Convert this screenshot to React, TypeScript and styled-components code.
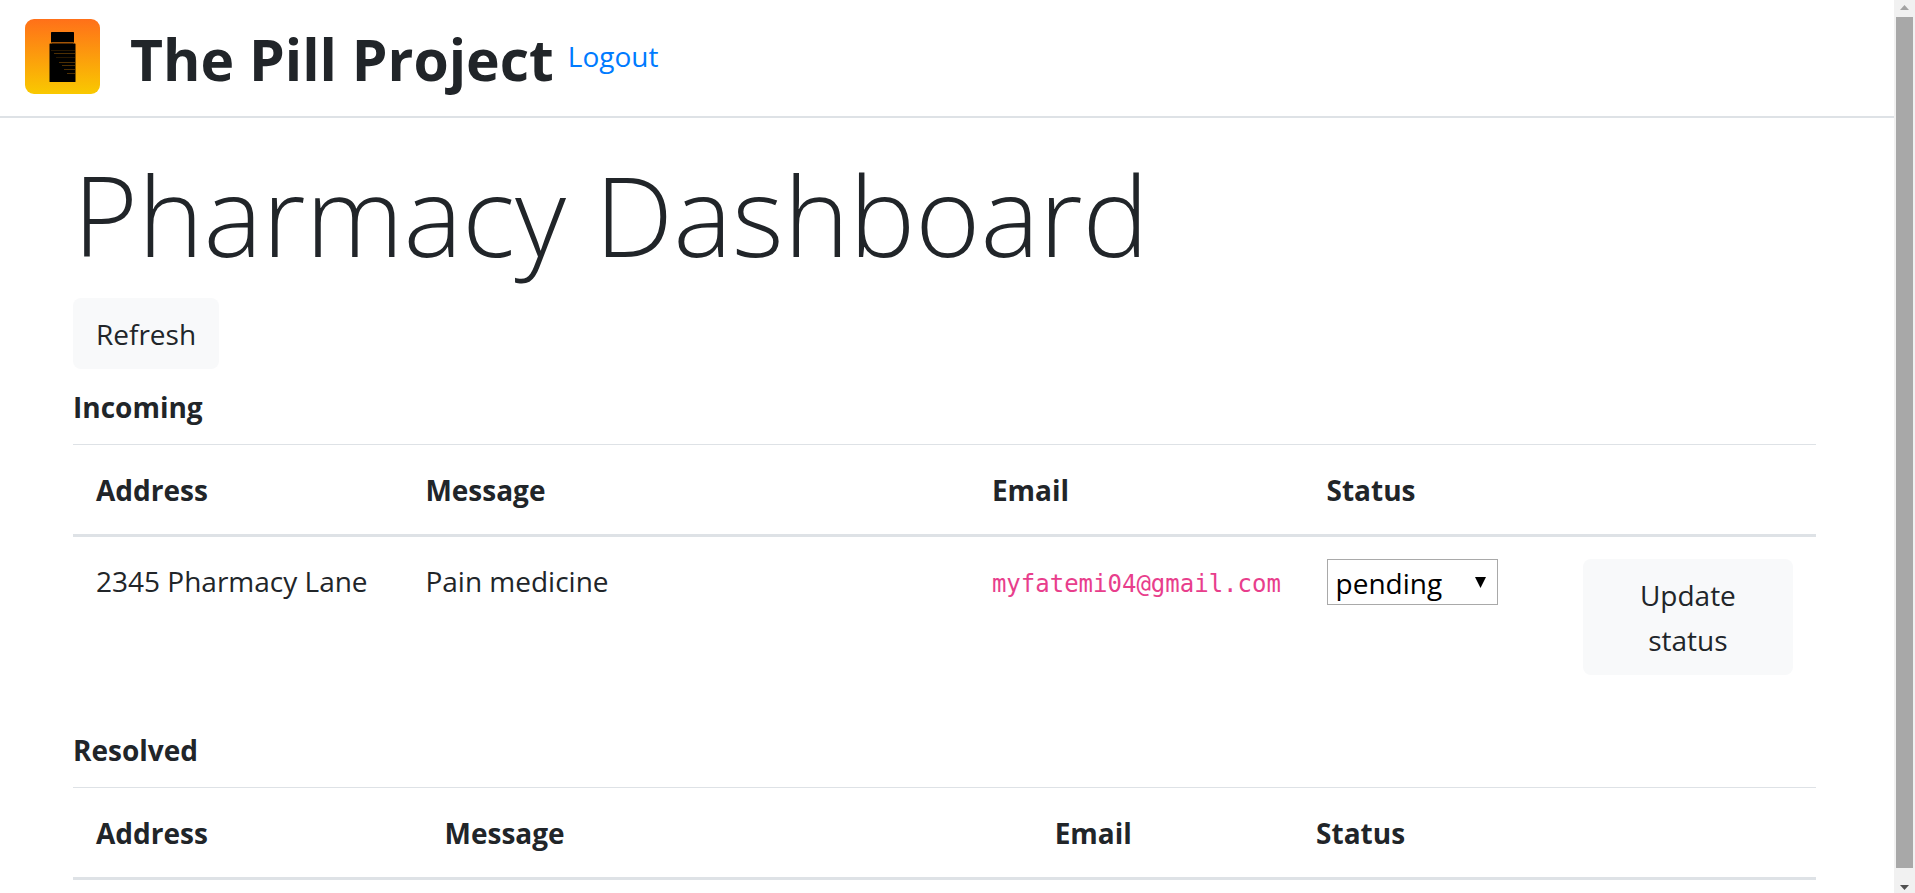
import React from "react";
import styled, { createGlobalStyle } from "styled-components";

const GlobalStyle = createGlobalStyle`
  *, *::before, *::after { box-sizing: border-box; }
  body {
    margin: 0;
    background: #fff;
    color: #212529;
    font-family: "Open Sans", "Noto Sans", sans-serif;
    font-size: 28px;
    line-height: 45px;
  }
`;

const Window = styled.div`
  display: flex;
  height: 100vh;
  overflow: hidden;
`;

const Page = styled.div`
  flex: 1;
  min-width: 0;
`;

const Header = styled.header`
  display: flex;
  align-items: center;
  height: 118px;
  padding: 0 25px 3px;
  border-bottom: 2px solid #dee2e6;
`;

const Logo = styled.svg`
  flex: none;
  width: 75px;
  height: 75px;
  margin-right: 30px;
`;

const Brand = styled.h1`
  margin: 0 14px 0 0;
  padding-top: 4px;
  font-size: 57px;
  font-weight: 700;
  line-height: 72px;
`;

const NavLink = styled.a`
  color: #007bff;
  text-decoration: none;
`;

const Main = styled.main`
  padding: 24px 78px 0 73px;
`;

const Title = styled.h2`
  margin: 0 0 12px;
  font-size: 111px;
  font-weight: 300;
  line-height: 144px;
`;

const Button = styled.button<{ $block?: boolean }>`
  display: block;
  width: ${(p) => (p.$block ? "100%" : "auto")};
  padding: 14px ${(p) => (p.$block ? "48px" : "23px")} 12px;
  border: 0;
  border-radius: 8px;
  background: #f8f9fa;
  color: #212529;
  font: inherit;
  text-align: center;
`;

const SectionTitle = styled.h3`
  margin: 0;
  padding: 16px 0 14px;
  font-size: 28px;
  font-weight: 700;
  line-height: 45px;
`;

const Table = styled.table`
  width: 100%;
  margin-bottom: 15px;
  border-collapse: separate;
  border-spacing: 0;
  table-layout: fixed;
`;

const Col = styled.col<{ $share: number }>`
  width: ${(p) => p.$share}%;
`;

const HeadCell = styled.th`
  padding: 23px 23px 21px;
  border-top: 1px solid #dee2e6;
  border-bottom: 3px solid #dee2e6;
  font-weight: 700;
  text-align: left;
`;

const Cell = styled.td`
  padding: 22px 23px;
  vertical-align: top;
`;

const Email = styled.code`
  color: #e83e8c;
  font-family: "DejaVu Sans Mono", "Liberation Mono", monospace;
  font-size: 24px;
`;

const SelectBox = styled.div`
  position: relative;
  width: 171px;
`;

const Select = styled.select`
  display: block;
  width: 100%;
  height: 46px;
  padding: 1px 40px 0 8px;
  appearance: none;
  border: 1px solid #a9a9a9;
  border-radius: 0;
  background: #fff;
  color: #000;
  font: inherit;
`;

const SelectArrow = styled.svg`
  position: absolute;
  top: 18px;
  right: 12px;
  width: 11px;
  height: 11px;
  pointer-events: none;
`;

const Scrollbar = styled.div`
  display: flex;
  flex: none;
  flex-direction: column;
  width: 21px;
  padding: 0 2px;
  background: #f1f1f1;
`;

const Thumb = styled.div`
  flex: 1;
  background: #a8a8a8;
`;

const ScrollArrow = styled.svg<{ $height: number }>`
  display: block;
  width: 17px;
  height: ${(p) => p.$height}px;
`;

const columns = ["Address", "Message", "Email", "Status"];

function PillLogo() {
  return (
    <Logo viewBox="0 0 75 75" aria-hidden="true">
      <defs>
        <linearGradient id="sunset" x1="0" y1="0" x2="0" y2="1">
          <stop offset="0" stopColor="#ff7019" />
          <stop offset="1" stopColor="#f9c900" />
        </linearGradient>
      </defs>
      <rect width="75" height="75" rx="9" fill="url(#sunset)" />
      <rect x="26" y="13" width="23" height="10.5" rx="0.6" />
      <rect x="27" y="23" width="21" height="2" fill="#a35406" />
      <rect x="24.5" y="24.5" width="26" height="38.5" rx="0.6" />
      <g stroke="#4e2f03">
        <path d="M29 34.5H50M34 43.5H50M37 46.5H50M39 50.5H50M42 54.5H50" />
        <path d="M26 31.5H50M31 38.5H50" opacity="0.5" />
      </g>
    </Logo>
  );
}

function OrderTable({
  shares,
  labelledBy,
  children,
}: {
  shares: number[];
  labelledBy: string;
  children?: React.ReactNode;
}) {
  return (
    <Table aria-labelledby={labelledBy}>
      <colgroup>
        {shares.map((share, i) => (
          <Col key={i} $share={share} />
        ))}
      </colgroup>
      <thead>
        <tr>
          {columns.map((name) => (
            <HeadCell key={name} scope="col">
              {name}
            </HeadCell>
          ))}
          <HeadCell as="td" />
        </tr>
      </thead>
      <tbody>{children}</tbody>
    </Table>
  );
}

export default function App() {
  return (
    <>
      <GlobalStyle />
      <Window>
        <Page>
          <Header>
            <PillLogo />
            <Brand>The Pill Project</Brand>
            <NavLink href="#logout">Logout</NavLink>
          </Header>
          <Main>
            <Title>Pharmacy Dashboard</Title>
            <Button type="button">Refresh</Button>
            <SectionTitle id="incoming">Incoming</SectionTitle>
            <OrderTable labelledBy="incoming" shares={[18.9, 32.5, 19.2, 14.7, 14.7]}>
              <tr>
                <Cell>2345 Pharmacy Lane</Cell>
                <Cell>Pain medicine</Cell>
                <Cell>
                  <Email>myfatemi04@gmail.com</Email>
                </Cell>
                <Cell>
                  <SelectBox>
                    <Select aria-label="Status" defaultValue="pending">
                      <option value="pending">pending</option>
                      <option value="resolved">resolved</option>
                    </Select>
                    <SelectArrow viewBox="0 0 11 11" aria-hidden="true">
                      <path d="M0 0H11L5.5 11Z" />
                    </SelectArrow>
                  </SelectBox>
                </Cell>
                <Cell>
                  <Button type="button" $block>
                    Update status
                  </Button>
                </Cell>
              </tr>
            </OrderTable>
            <SectionTitle id="resolved">Resolved</SectionTitle>
            <OrderTable labelledBy="resolved" shares={[20, 35, 15, 15, 15]} />
          </Main>
        </Page>
        <Scrollbar aria-hidden="true">
          <ScrollArrow $height={17} viewBox="0 0 17 17">
            <path d="M4 10L8.5 5L13 10Z" fill="#a3a3a3" />
          </ScrollArrow>
          <Thumb />
          <ScrollArrow $height={25} viewBox="0 0 17 25">
            <path d="M4 17H13L8.5 22Z" fill="#505050" />
          </ScrollArrow>
        </Scrollbar>
      </Window>
    </>
  );
}
